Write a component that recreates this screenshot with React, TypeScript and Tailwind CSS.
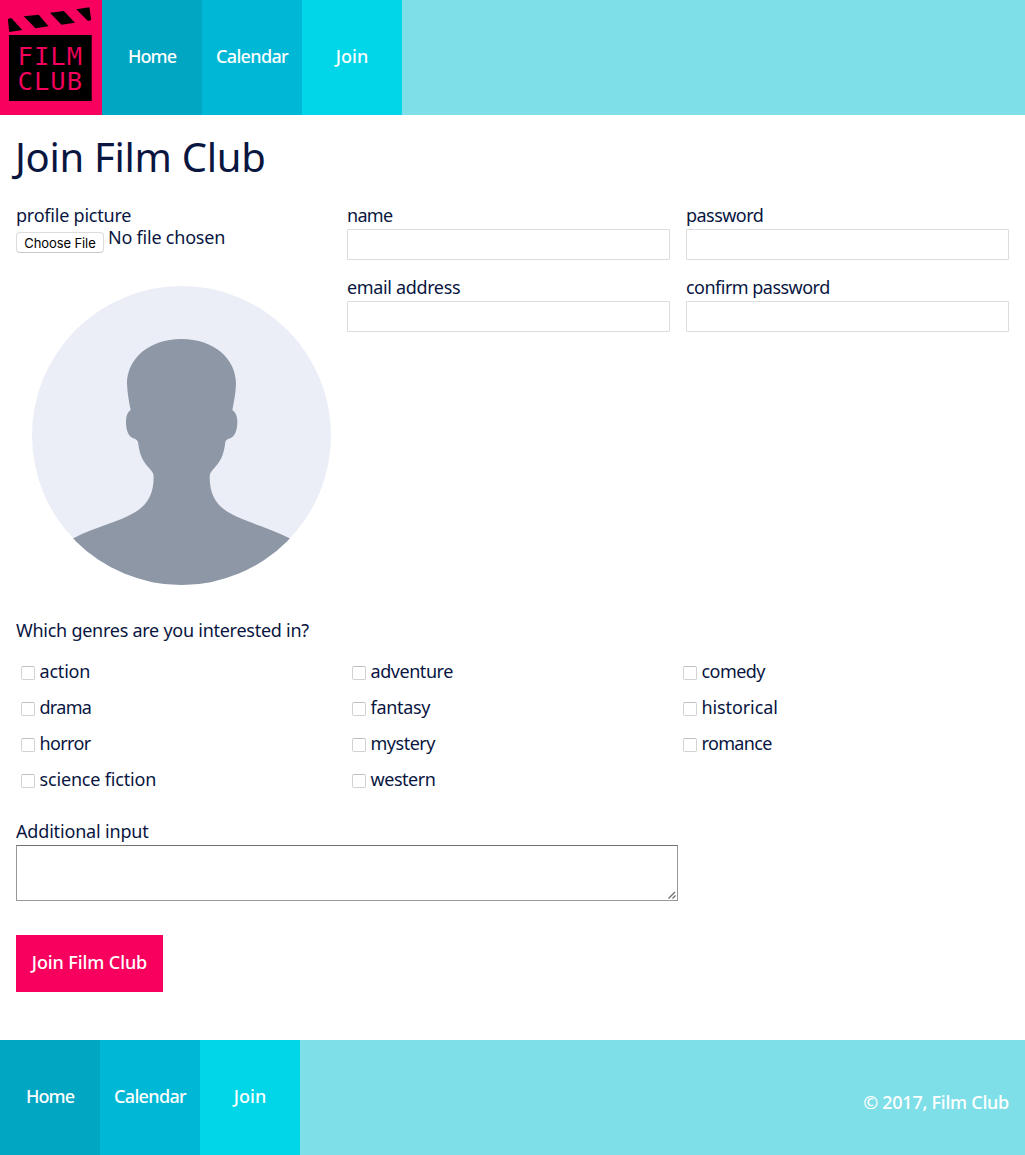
const navItems = [
  { label: "Home", style: "bg-[#00a6c2] tracking-[-0.9px]" },
  { label: "Calendar", style: "bg-[#00b8d6] tracking-[-0.65px]" },
  { label: "Join", style: "bg-[#00d6e8] tracking-[0px]" },
];

const genres = [
  { name: "action", style: "tracking-[-0.2px]" },
  { name: "adventure", style: "tracking-[-0.45px]" },
  { name: "comedy", style: "tracking-[-0.55px]" },
  { name: "drama", style: "tracking-[-0.7px]" },
  { name: "fantasy", style: "tracking-[-0.3px]" },
  { name: "historical", style: "tracking-[-0.1px]" },
  { name: "horror", style: "tracking-[-0.65px]" },
  { name: "mystery", style: "tracking-[-0.5px]" },
  { name: "romance", style: "tracking-[-0.65px]" },
  { name: "science fiction", style: "tracking-[-0.17px]" },
  { name: "western", style: "tracking-[-0.45px]" },
];

function Logo() {
  return (
    <a href="#" aria-label="Film Club" className="block h-[115px] w-[102px] bg-[#f7005e]">
      <svg width="102" height="115" viewBox="0 0 102 115">
        <g fill="#000">
          <path d="M7.8 19 11.3 18 22.3 29.9 9.3 32Z" />
          <path d="M23.7 16.2 38.7 14.7 48.6 26.2 35.5 28.3Z" />
          <path d="M50 12.8 63.8 10.9 75 22.7 61.5 24.7Z" />
          <path d="M76.3 9.2 89.4 7.2 91.2 20 88 21Z" />
          <path d="M9 35H91.7V101H9Z" />
        </g>
        <g
          fill="#f7005e"
          stroke="#000"
          strokeWidth="0.15"
          fontFamily="'DejaVu Sans Mono', monospace"
          fontSize="25.5"
          letterSpacing="1"
        >
          <text x="17.6" y="64.6">FILM</text>
          <text x="17.6" y="89.6">CLUB</text>
        </g>
      </svg>
    </a>
  );
}

function Nav() {
  return (
    <nav className="flex font-medium text-white">
      {navItems.map((item) => (
        <a
          key={item.label}
          href="#"
          className={`flex h-[115px] w-[100px] items-center justify-center pb-[3px] ${item.style}`}
        >
          {item.label}
        </a>
      ))}
    </nav>
  );
}

function Avatar() {
  return (
    <svg className="mt-[33px] ml-4 block" width="299" height="299" viewBox="36 33 897 897">
      <clipPath id="avatar-circle">
        <circle cx="484.5" cy="481.5" r="448.5" />
      </clipPath>
      <g clipPath="url(#avatar-circle)">
        <path fill="#ebeef6" d="M36 33H933V930H36Z" />
        <path
          fill="#8e97a6"
          d="M484.5 192C386 192 321 252 321 326C322 354 327 380 332 405C322 412 318 423 318 439C318 459 322 478 333 486C342 492 350 491 354 501C358 531 363 552 385 577C395 588 401 594 401 605C401 660 380 690 345 712C294 743 230 754 160 790L20 930H949L809 790C741 754 677 743 625 712C590 690 569 660 569 605C569 594 575 588 585 577C607 552 612 532 616 501C619 491 628 493 637 486C648 478 652 459 652 439C652 423 647 412 637 405C642 380 647 354 648 326C648 252 583 192 484.5 192Z"
        />
      </g>
    </svg>
  );
}

function Field({ label, type, style }: { label: string; type: string; style: string }) {
  return (
    <label className="block h-[72px]">
      <span className={`block ${style}`}>{label}</span>
      <input
        type={type}
        className="mt-[3px] block h-[31px] w-full rounded-[1px] border border-[#dcdcdc] bg-white px-1 outline-none"
      />
    </label>
  );
}

export default function App() {
  return (
    <div className="flex h-[1155px] w-[1025px] flex-col bg-white font-['Noto_Sans',sans-serif] text-[18px] leading-[22px] text-[#09163f]">
      <header className="flex h-[115px] bg-[#7fdfe8]">
        <Logo />
        <Nav />
      </header>

      <main className="flex-1 px-4">
        <h1 className="-ml-px pt-[17px] text-[40px] leading-[50px] tracking-[-0.3px]">Join Film Club</h1>

        <form>
          <div className="mt-[22px] flex h-[410px]">
            <div className="w-[331px]">
              <span className="block tracking-[-0.22px]">profile picture</span>
              <div className="flex h-[27px] items-start">
                <button
                  type="button"
                  className="mt-[6px] mr-1 h-[21px] w-[88px] rounded-[4px] border border-[#dcdcdc] border-b-[#c8c8c8] bg-white font-[Inter,sans-serif] text-[13px] leading-[18px] tracking-[-0.1px] whitespace-nowrap text-black"
                >
                  Choose File
                </button>
                <span className="tracking-[-0.22px]">No file chosen</span>
              </div>
              <Avatar />
            </div>
            <div className="grid w-[662px] grid-cols-2 content-start gap-x-4">
              <Field label="name" type="text" style="tracking-[-0.7px]" />
              <Field label="password" type="password" style="tracking-[-0.55px]" />
              <Field label="email address" type="email" style="tracking-[-0.35px]" />
              <Field label="confirm password" type="password" style="tracking-[-0.52px]" />
            </div>
          </div>

          <p className="mt-[5px] tracking-[-0.26px]">Which genres are you interested in?</p>
          <div className="mt-[19px] grid grid-cols-3">
            {genres.map((genre) => (
              <label key={genre.name} className="flex h-9 items-start pl-[5px]">
                <input
                  type="checkbox"
                  className="mt-[6px] mr-[4.5px] size-[14px] shrink-0 appearance-none rounded-[2px] border border-[#d2d2d2] border-t-[#c0c0c0] bg-white"
                />
                <span className={genre.style}>{genre.name}</span>
              </label>
            ))}
          </div>

          <label className="mt-4 block w-[662px]">
            <span className="block tracking-[-0.17px]">Additional input</span>
            <div className="relative mt-[3px] h-[56px]">
              <textarea className="block h-[56px] w-full resize-none border border-[#999] border-t-[#707070] bg-white outline-none" />
              <svg
                className="pointer-events-none absolute right-[2px] bottom-[2px]"
                width="8"
                height="8"
                viewBox="0 0 8 8"
                stroke="#6b6b6b"
                strokeWidth="1.3"
              >
                <path d="M.5 7.5 7 1M4.5 7.5 7.5 4.5" />
              </svg>
            </div>
          </label>

          <button
            type="button"
            className="mt-[34px] block h-[57px] w-[147px] bg-[#f7005e] pb-[4px] font-medium tracking-[-0.1px] text-white"
          >
            Join Film Club
          </button>
        </form>
      </main>

      <footer className="flex h-[115px] justify-between bg-[#7fdfe8]">
        <Nav />
        <p className="mt-[51px] mr-4 font-medium tracking-[-0.25px] text-white">© 2017, Film Club</p>
      </footer>
    </div>
  );
}
